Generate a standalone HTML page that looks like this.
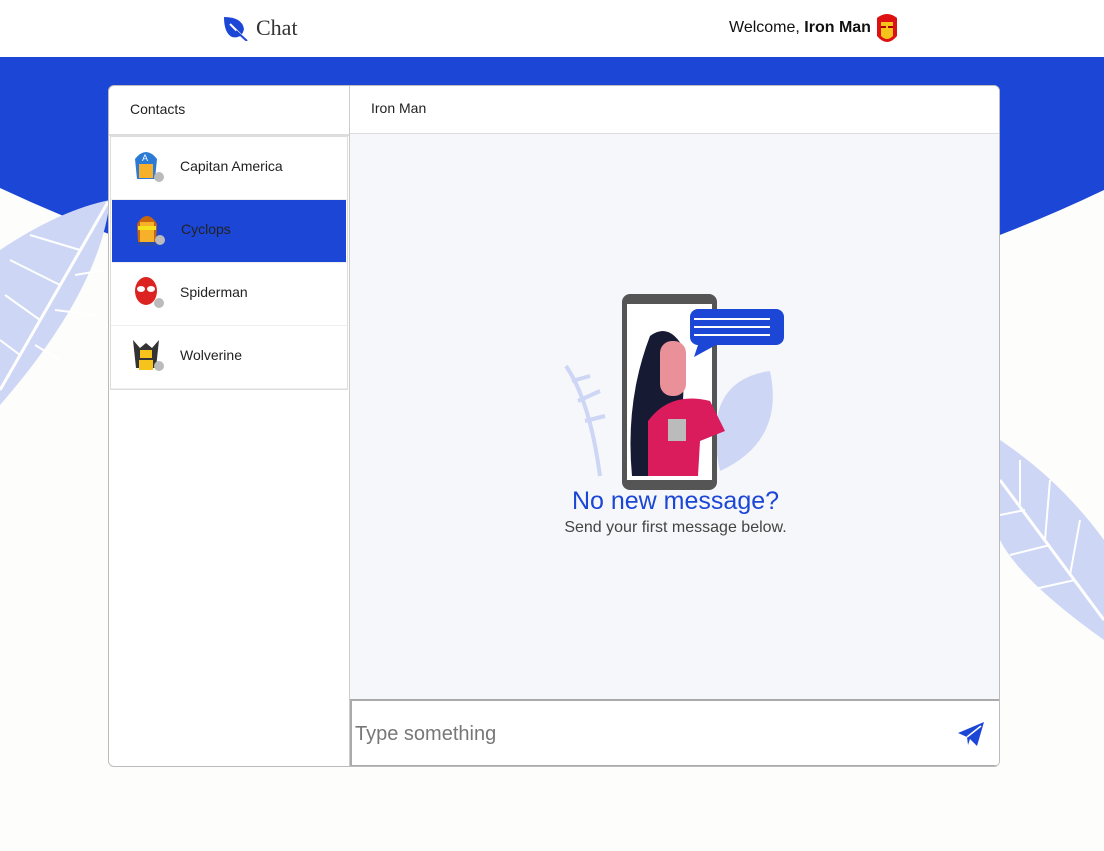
<!DOCTYPE html>
<html><head><meta charset="utf-8"><style>
*{margin:0;padding:0;box-sizing:border-box}
body{width:1104px;height:851px;overflow:hidden;background:#fdfdfb;font-family:"Liberation Sans",sans-serif;position:relative}
.top{position:absolute;left:0;top:0;width:1104px;height:57px;background:#fff}
.card{position:absolute;left:108px;top:85px;width:892px;height:682px;background:#fff;border:1px solid #bbb;border-radius:6px;overflow:hidden}
.left{position:absolute;left:0;top:0;width:241px;height:682px;border-right:1px solid #ccc}
.lh{height:50px;border-bottom:2px solid #ddd;padding:15px 21px;font-size:14px;color:#222}
.list{border:1px solid #ddd;margin:0 1px;}
.row{height:63px;border-bottom:1px solid #eee;position:relative;font-size:14px;color:#222;padding:21px 0 0 69px}
.row.sel{background:#1c46d6;margin:0 1px}
.av{position:absolute;left:20px;top:12px;width:30px;height:34px}
.dot{position:absolute;left:43px;top:35px;width:10px;height:10px;border-radius:50%;background:#bbb}
.right{position:absolute;left:241px;top:0;width:651px;height:682px;background:#f6f7fa}
.rh{height:48px;background:#fff;border-bottom:1px solid #ddd;padding:14px 21px;font-size:14px;color:#222}
.inp{position:absolute;left:0;top:613px;width:651px;height:68px;background:#fff;border:2px solid #aaa;font-size:20px;color:#777;padding:22px 3px}
</style></head><body>
<svg style="position:absolute;left:0;top:0" width="1104" height="400"><path d="M0 57 L1104 57 L1104 190 Q560 450 0 188Z" fill="#1c46d6"/></svg>
<div class="top"></div>
<svg style="position:absolute;left:0;top:190px" width="110" height="220"><path d="M0 60 Q60 20 110 10 Q100 100 0 215Z" fill="#cdd6f5"/><path d="M0 200 L108 12" stroke="#fff" stroke-width="3"/><g stroke="#fff" stroke-width="2"><path d="M20 165 L0 150M40 130 L5 105M60 95 L10 70M80 60 L30 45M35 155 L60 170M55 120 L95 125M75 85 L105 80"/></g></svg>
<svg style="position:absolute;left:1000px;top:440px" width="104" height="200"><path d="M0 0 Q60 40 104 100 L104 200 Q20 140 0 100Z" fill="#cdd6f5"/><path d="M0 40 L104 180" stroke="#fff" stroke-width="3"/><g stroke="#fff" stroke-width="2"><path d="M20 65 L20 20M45 100 L50 40M70 135 L80 80M25 70 L0 75M50 105 L10 115M75 140 L30 150"/></g></svg>
<svg style="position:absolute;left:222px;top:15px" width="26" height="26"><path d="M2 2 Q20 2 22 14 Q20 24 10 22 Q2 18 2 2Z" fill="#1c46d6"/><path d="M8 9 L25 26" stroke="#fff" stroke-width="2"/><path d="M14 16 L25 26" stroke="#1c46d6" stroke-width="2"/></svg>
<div style="position:absolute;left:256px;top:15px;font-family:'Liberation Serif',serif;font-size:22px;color:#333">Chat</div>
<div style="position:absolute;left:729px;top:19px;font-size:16px;color:#111">Welcome, <b>Iron Man</b></div>
<svg style="position:absolute;left:875px;top:12px" width="24" height="34"><path d="M2 6 Q12 -2 22 6 L22 24 Q12 36 2 24Z" fill="#d11"/><path d="M6 10 L18 10 L18 24 Q12 30 6 24Z" fill="#f6c21c"/><path d="M6 15h5M13 15h5" stroke="#a00" stroke-width="2"/></svg>
<div class="card">
<div class="left"><div class="lh">Contacts</div>
<div class="list">
<div class="row"><svg class="av"><path d="M4 10 Q15 -4 26 10 L24 30 L6 30Z" fill="#2a7ad6"/><rect x="8" y="15" width="14" height="14" fill="#f6b02a"/><text x="11" y="12" font-size="9" fill="#fff">A</text></svg><div class="dot"></div>Capitan America</div>
<div class="row sel"><svg class="av"><path d="M5 12 Q15 -4 25 12 L24 30 L6 30Z" fill="#c8650f"/><rect x="8" y="10" width="14" height="20" fill="#f6b02a"/><rect x="6" y="14" width="18" height="4" fill="#f5e21c"/><rect x="6" y="30" width="18" height="4" fill="#2a4ab0"/></svg><div class="dot"></div>Cyclops</div>
<div class="row"><svg class="av"><ellipse cx="15" cy="16" rx="11" ry="14" fill="#d22"/><ellipse cx="10" cy="14" rx="4" ry="3" fill="#fff"/><ellipse cx="20" cy="14" rx="4" ry="3" fill="#fff"/></svg><div class="dot"></div>Spiderman</div>
<div class="row"><svg class="av"><path d="M2 2 L9 10 L15 5 L21 10 L28 2 L25 30 L5 30Z" fill="#333"/><rect x="9" y="12" width="12" height="8" fill="#f6c21c"/><rect x="8" y="22" width="14" height="10" fill="#f6c21c"/></svg><div class="dot"></div>Wolverine</div>
</div></div>
<div class="right"><div class="rh">Iron Man</div>
<svg style="position:absolute;left:210px;top:205px" width="230" height="200">
<path d="M6 75 Q30 110 40 185 M12 90 L30 85 M18 110 L40 100 M25 130 L45 125" stroke="#cdd6f5" stroke-width="4" fill="none"/>
<path d="M160 180 Q140 90 210 80 Q225 150 160 180Z" fill="#cdd6f5"/>
<rect x="62" y="3" width="95" height="196" rx="8" fill="#555"/>
<rect x="67" y="13" width="85" height="176" fill="#fff"/>
<path d="M90 45 Q110 30 125 60 L120 185 L72 185 Q65 110 90 45Z" fill="#161a33"/>
<rect x="100" y="50" width="26" height="55" rx="12" fill="#e99098"/>
<path d="M88 130 Q110 100 150 110 L165 140 L140 150 L138 185 L88 185Z" fill="#da1c5c"/>
<rect x="108" y="128" width="18" height="22" fill="#bbb"/>
<path d="M120 30 h96 a8 8 0 0 1 8 8 v20 a8 8 0 0 1 -8 8 h-60 l-22 12 l4 -12 a8 8 0 0 1 -8 -8 v-20 a8 8 0 0 1 8 -8Z" fill="#1c46d6" transform="translate(0,-12)"/>
<path d="M134 28h76M134 36h76M134 44h76" stroke="#fff" stroke-width="2"/>
</svg>
<div style="position:absolute;left:0;width:651px;top:401px;text-align:center;font-size:25px;color:#1c46d6">No new message?</div>
<div style="position:absolute;left:0;width:651px;top:433px;text-align:center;font-size:16px;color:#444">Send your first message below.</div>
<div class="inp">Type something
<svg style="position:absolute;right:14px;top:20px" width="28" height="26"><path d="M1 12 L27 1 L20 25 L13 18 L11 24 L10 16Z" fill="#1c46d6"/><path d="M10 16 L24 5" stroke="#fff" stroke-width="1.5"/></svg></div>
</div></div>
</body></html>
